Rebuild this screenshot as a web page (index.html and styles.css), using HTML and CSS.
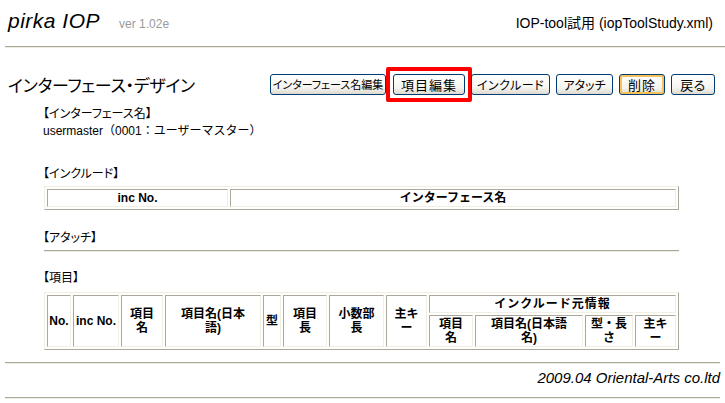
FILE: index.html
```html
<!DOCTYPE html>
<html lang="ja">
<head>
<meta charset="utf-8">
<title>pirka IOP</title>
<link rel="stylesheet" href="styles.css">
</head>
<body>
<div class="page">
  <header class="top">
    <div class="brand-group">
      <span class="brand">pirka IOP</span><span class="ver">ver 1.02e</span>
    </div>
    <div class="doc">IOP-tool試用 (iopToolStudy.xml)</div>
  </header>
  <div class="rule rule-top"></div>

  <div class="titlebar">
    <h1 class="title">インターフェース・デザイン</h1>
    <div class="actions">
      <button class="btn btn-ifname">インターフェース名編集</button>
      <span class="highlight"><button class="btn btn-item">項目編集</button></span>
      <button class="btn btn-include">インクルード</button>
      <button class="btn btn-attach">アタッチ</button>
      <button class="btn btn-delete">削除</button>
      <button class="btn btn-back">戻る</button>
    </div>
  </div>

  <div class="content">
    <div class="label label-first">【インターフェース名】</div>
    <div class="value">usermaster（0001：ユーザーマスター）</div>

    <div class="label label-include">【インクルード】</div>
    <table class="grid grid-include">
      <colgroup><col class="w181"><col class="w446"></colgroup>
      <tr><th>inc No.</th><th>インターフェース名</th></tr>
    </table>

    <div class="label label-attach">【アタッチ】</div>
    <div class="rule-inner"></div>

    <div class="label label-items">【項目】</div>
    <table class="grid grid-items">
      <colgroup>
        <col class="w24"><col class="w46"><col class="w42"><col class="w96">
        <col class="w18"><col class="w44"><col class="w55"><col class="w41">
        <col class="w44"><col class="w108"><col class="w48"><col class="w41">
      </colgroup>
      <tr>
        <th rowspan="2">No.</th>
        <th rowspan="2">inc No.</th>
        <th rowspan="2">項目<br>名</th>
        <th rowspan="2">項目名(日本<br>語)</th>
        <th rowspan="2">型</th>
        <th rowspan="2">項目<br>長</th>
        <th rowspan="2">小数部<br>長</th>
        <th rowspan="2">主キ<br>ー</th>
        <th colspan="4" class="group">インクルード元情報</th>
      </tr>
      <tr>
        <th>項目<br>名</th>
        <th>項目名(日本語<br>名)</th>
        <th>型・長<br>さ</th>
        <th>主キ<br>ー</th>
      </tr>
    </table>
  </div>

  <div class="rule rule-foot"></div>
  <footer class="foot">2009.04 Oriental-Arts co.ltd</footer>
  <div class="rule rule-bottom"></div>
</div>
</body>
</html>
```
FILE: styles.css
```css
* { box-sizing: border-box; }
html, body { margin: 0; padding: 0; background: #fff; }
body {
  font-family: "Liberation Sans", "Noto Sans CJK JP", sans-serif;
  color: #000;
}
.page { width: 725px; padding-left: 5px; }

.top {
  display: flex;
  justify-content: space-between;
  align-items: baseline;
  height: 46px;
  padding: 9px 12px 0 3px;
}
.brand {
  font-style: italic;
  font-size: 21px;
  letter-spacing: 0.5px;
  line-height: 24px;
}
.ver { font-size: 12px; color: #9a9a9a; margin-left: 19px; }
.doc { font-size: 14px; line-height: 18px; }

.rule {
  height: 2px;
  border-top: 1px solid #aca899;
  border-bottom: 1px solid #ecebe4;
}
.rule-foot, .rule-bottom { margin-right: 5px; }

.titlebar {
  display: flex;
  justify-content: space-between;
  align-items: center;
  height: 21px;
  margin: 26px 10px 0 3px;
}
.title {
  margin: 0;
  font-family: "Noto Sans CJK JP", sans-serif;
  font-weight: normal;
  font-size: 17px;
  line-height: 21px;
  font-feature-settings: "palt";
  letter-spacing: -0.3px;
}
.actions { display: flex; align-items: center; gap: 6px; }
.btn {
  height: 21px;
  padding: 0;
  border: 1px solid #003c74;
  border-radius: 3px;
  background: linear-gradient(#ffffff, #f6f5f0 65%, #dedad0);
  font-family: "Noto Sans CJK JP", sans-serif;
  font-size: 13px;
  line-height: 19px;
  color: #000;
  text-align: center;
  font-feature-settings: "palt";
}
.btn-ifname { width: 116px; font-size: 11px; margin-right: 1px; }
.highlight {
  display: flex;
  margin: -7px;
  padding: 3px;
  border: 4px solid #f00;
  border-radius: 2px;
}
.btn-item { width: 72px; letter-spacing: 1px; }
.btn-include { width: 79px; font-size: 12px; letter-spacing: 0.5px; }
.btn-attach { width: 57px; font-size: 12px; }
.btn-delete { width: 46px; box-shadow: inset 0 0 0 2px #f8c25a; letter-spacing: 1px; }
.btn-back { width: 44px; letter-spacing: 0.5px; }

.content { margin-left: 38px; width: 636px; }
.label, .value { font-size: 12px; line-height: 17px; }
.label { font-feature-settings: "palt"; }
.label-first { margin-top: 11px; }
.label-include { margin-top: 26px; }
.label-attach { margin-top: 20px; }
.label-items { margin-top: 18px; }

.grid {
  margin-left: 1px;
  width: 635px;
  table-layout: fixed;
  border-collapse: separate;
  border-spacing: 2px;
  border: 1px solid;
  border-color: #f1efe2 #aca899 #aca899 #f1efe2;
}
.grid-include { margin-top: 3px; }
.grid-items { margin-top: 5px; }
.grid th {
  padding: 1px;
  border: 1px solid;
  border-color: #aca899 #f1efe2 #f1efe2 #aca899;
  font-size: 12px;
  line-height: 14px;
  font-weight: bold;
  text-align: center;
  vertical-align: middle;
  white-space: nowrap;
  overflow: hidden;
}
.grid .group { letter-spacing: 1px; }

.w18 { width: 18px; } .w24 { width: 24px; } .w41 { width: 41px; }
.w42 { width: 42px; } .w44 { width: 44px; } .w46 { width: 46px; }
.w48 { width: 48px; } .w55 { width: 55px; } .w96 { width: 96px; }
.w108 { width: 108px; } .w181 { width: 181px; } .w446 { width: 446px; }

.rule-inner {
  margin: 3px 0 0 1px;
  width: 635px;
  height: 2px;
  border-top: 1px solid #aca899;
  border-bottom: 1px solid #ecebe4;
}

.rule-foot { margin-top: 12px; }
.foot {
  margin: 6px 5px 0 0;
  text-align: right;
  font-style: italic;
  font-size: 15px;
  line-height: 16px;
}
.rule-bottom { margin-top: 11px; }
```
